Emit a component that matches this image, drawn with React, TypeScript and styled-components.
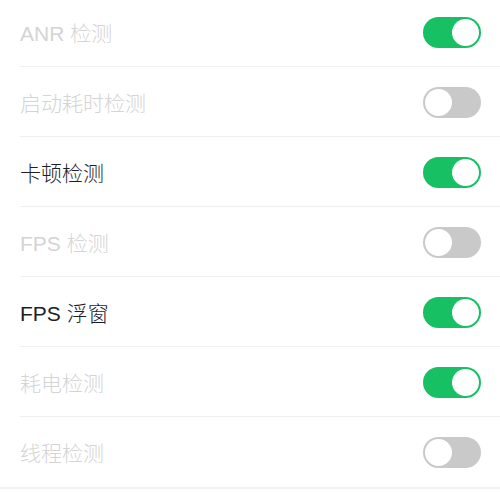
import React from "react";
import styled, { createGlobalStyle } from "styled-components";

const GlobalStyle = createGlobalStyle`
  html, body { margin: 0; padding: 0; background: #ffffff; }
  body { font-family: "Liberation Sans", "Noto Sans CJK SC", sans-serif; }
`;

const List = styled.div`
  display: flex;
  flex-direction: column;
  margin-top: -3px;
  border-bottom: 2px solid #f2f2f2;
  width: 500px;
`;

const Row = styled.div`
  display: flex;
  align-items: center;
  justify-content: space-between;
  height: 70px;
  box-sizing: border-box;
  padding: 0 19px 0 20px;
  position: relative;
  &:not(:last-child)::after {
    content: "";
    position: absolute;
    left: 20px;
    right: 0;
    bottom: 0;
    height: 1px;
    background: #efefef;
  }
`;

const Label = styled.span<{ $disabled: boolean }>`
  font-family: "Liberation Sans", "Noto Sans CJK SC", sans-serif;
  font-size: 21px;
  font-weight: 300;
  color: ${(p) => (p.$disabled ? "#d4d4d4" : "#1e1e1e")};
`;

const Track = styled.div<{ $on: boolean }>`
  width: 58px;
  height: 31px;
  border-radius: 16px;
  box-sizing: border-box;
  background: ${(p) => (p.$on ? "#17c062" : "#c9c9c9")};
  display: flex;
  align-items: center;
  justify-content: ${(p) => (p.$on ? "flex-end" : "flex-start")};
  padding: 0 2px;
`;

const Knob = styled.div`
  width: 27px;
  height: 27px;
  border-radius: 50%;
  background: #ffffff;
`;

const items: { label: string; on: boolean; disabled: boolean }[] = [
  { label: "ANR 检测", on: true, disabled: true },
  { label: "启动耗时检测", on: false, disabled: true },
  { label: "卡顿检测", on: true, disabled: false },
  { label: "FPS 检测", on: false, disabled: true },
  { label: "FPS 浮窗", on: true, disabled: false },
  { label: "耗电检测", on: true, disabled: true },
  { label: "线程检测", on: false, disabled: true },
];

export default function App() {
  return (
    <>
      <GlobalStyle />
      <List>
        {items.map((it) => (
          <Row key={it.label}>
            <Label $disabled={it.disabled}>{it.label}</Label>
            <Track $on={it.on}>
              <Knob />
            </Track>
          </Row>
        ))}
      </List>
    </>
  );
}
